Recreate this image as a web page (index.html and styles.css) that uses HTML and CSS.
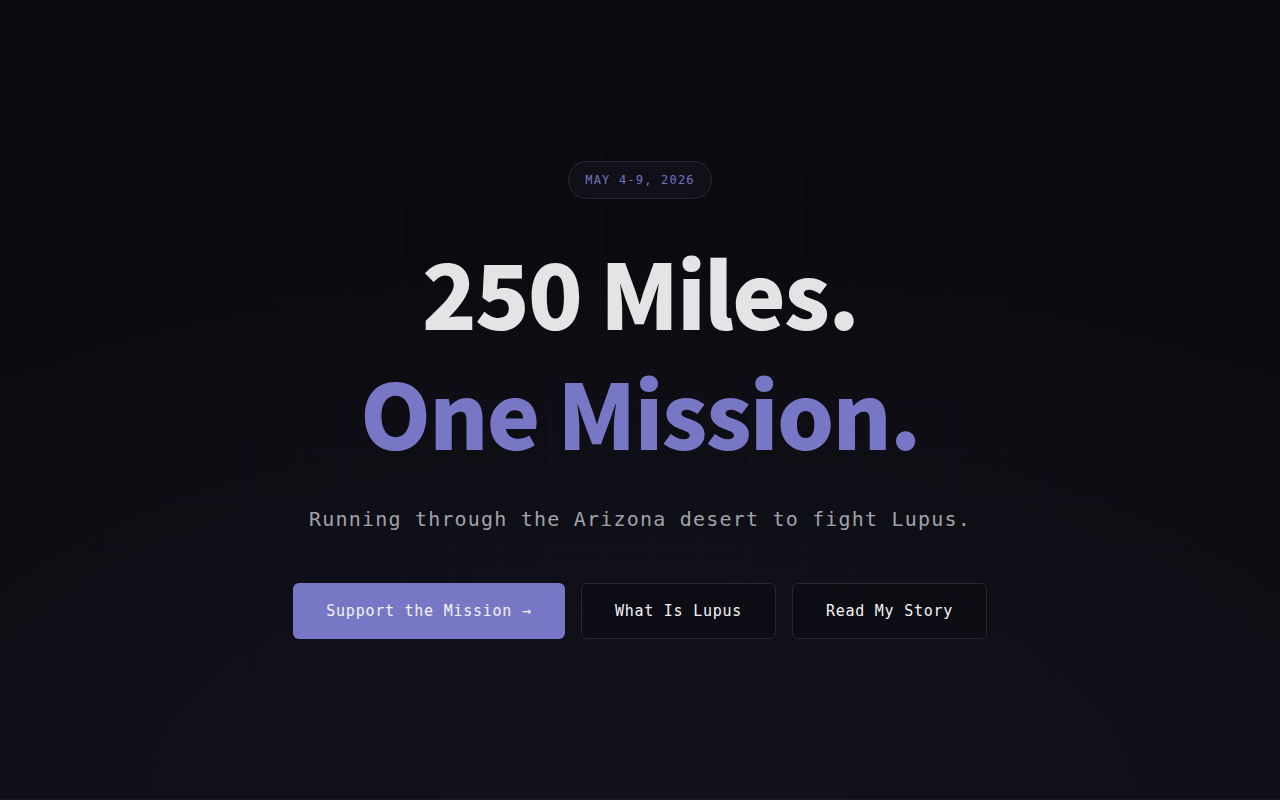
FILE: index.html
```html
<!DOCTYPE html>
<html lang="en">
<head>
<meta charset="utf-8">
<title>250 Miles. One Mission.</title>
<link rel="stylesheet" href="styles.css">
</head>
<body>
<main class="hero">
  <div class="grid"></div>
  <div class="content">
    <span class="badge">MAY 4-9, 2026</span>
    <h1 class="title">
      <span class="line line-white">250 Miles.</span>
      <span class="line line-purple">One Mission.</span>
    </h1>
    <p class="subtitle">Running through the Arizona desert to fight Lupus.</p>
    <div class="actions">
      <a class="btn btn-primary" href="#">Support the Mission →</a>
      <a class="btn btn-outline" href="#">What Is Lupus</a>
      <a class="btn btn-outline" href="#">Read My Story</a>
    </div>
  </div>
</main>
</body>
</html>
```

FILE: styles.css
```css
* { box-sizing: border-box; }
html, body { margin: 0; padding: 0; }
body {
  background: #0c0c11;
  font-family: "DejaVu Sans Mono", monospace;
  color: #e4e4e7;
}
.hero {
  position: relative;
  height: 800px;
  overflow: hidden;
  background:
    radial-gradient(ellipse 90% 70% at 50% 100%, #12121d 0%, #0f0f17 50%, #0b0b0f 100%);
  border-bottom: 1px solid #1a1a26;
}
.grid {
  position: absolute;
  inset: 0;
  background-image:
    linear-gradient(rgba(120,119,198,0.035) 1px, transparent 1px),
    linear-gradient(90deg, rgba(120,119,198,0.035) 1px, transparent 1px);
  background-size: 50px 50px;
  background-position: 0 0;
  -webkit-mask-image: radial-gradient(ellipse 50% 50% at 50% 50%, #000 0%, transparent 100%);
  mask-image: radial-gradient(ellipse 50% 50% at 50% 50%, #000 0%, transparent 100%);
}
.content {
  position: relative;
  display: flex;
  flex-direction: column;
  align-items: center;
  padding-top: 161px;
}
.badge {
  display: inline-block;
  height: 38px;
  line-height: 36px;
  padding: 0 16px;
  border: 1px solid rgba(120,119,198,0.22);
  border-radius: 999px;
  background: rgba(120,119,198,0.05);
  color: #7472c0;
  font-size: 12px;
  letter-spacing: 0.1em;
}
.title {
  margin: 32px 0 0;
  display: flex;
  flex-direction: column;
  align-items: center;
  font-family: "Noto Sans CJK SC", "Noto Sans", sans-serif;
  font-weight: 900;
  font-size: 90px;
  line-height: 120px;
  letter-spacing: -0.02em;
}
.line { display: block; }
.line-white { color: #e4e4e7; }
.line-purple { color: #7877c6; }
.subtitle {
  margin: 32px 0 0;
  color: #a1a1aa;
  font-size: 20px;
  letter-spacing: 0.06em;
  line-height: 32px;
}
.actions {
  margin-top: 48px;
  display: flex;
  gap: 16px;
}
.btn {
  display: flex;
  align-items: center;
  justify-content: center;
  height: 56px;
  padding: 0 32px;
  border-radius: 6px;
  font-size: 15px;
  letter-spacing: 0.05em;
  text-decoration: none;
  color: #f4f4f5;
}
.btn-primary {
  background: #7877c6;
  width: 272px;
}
.btn-outline {
  border: 1px solid #26253a;
  background: rgba(12,12,18,0.6);
  width: 195px;
}
```
